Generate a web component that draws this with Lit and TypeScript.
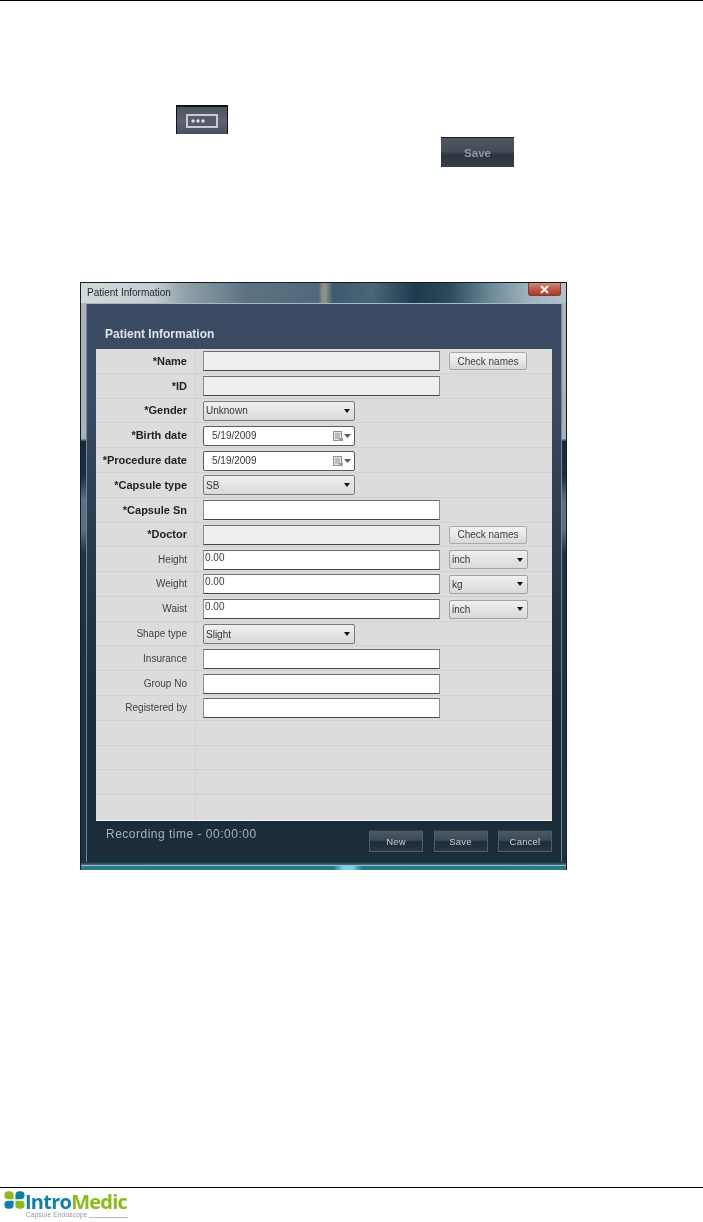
import { LitElement, html, css, svg } from "lit";
import { customElement } from "lit/decorators.js";

type Row = { label: string; strong?: boolean; kind?: string; value?: string; side?: string; sideValue?: string };

const rows: Row[] = [
  { label: "*Name", strong: true, kind: "disabled", side: "button" },
  { label: "*ID", strong: true, kind: "disabled" },
  { label: "*Gender", strong: true, kind: "select", value: "Unknown" },
  { label: "*Birth date", strong: true, kind: "date", value: "5/19/2009" },
  { label: "*Procedure date", strong: true, kind: "date", value: "5/19/2009" },
  { label: "*Capsule type", strong: true, kind: "select", value: "SB" },
  { label: "*Capsule Sn", strong: true, kind: "text" },
  { label: "*Doctor", strong: true, kind: "disabled", side: "button" },
  { label: "Height", kind: "text", value: "0.00", side: "unit", sideValue: "inch" },
  { label: "Weight", kind: "text", value: "0.00", side: "unit", sideValue: "kg" },
  { label: "Waist", kind: "text", value: "0.00", side: "unit", sideValue: "inch" },
  { label: "Shape type", kind: "select", value: "Slight" },
  { label: "Insurance", kind: "text" },
  { label: "Group No", kind: "text" },
  { label: "Registered by", kind: "text" },
  { label: "" },
  { label: "" },
  { label: "" },
  { label: "" },
];

@customElement("app-root")
export class AppRoot extends LitElement {
  static styles = css`
    :host {
      display: flex;
      flex-direction: column;
      width: 703px;
      height: 1222px;
      background: #fff;
      font-family: "Liberation Sans", Arial, sans-serif;
      overflow: hidden;
    }
    .top-rule { height: 1px; background: #000; flex: none; }
    .ellipsis {
      margin: 104px 0 0 176px;
      width: 52px;
      height: 29px;
      box-sizing: border-box;
      border: 1px solid #111318;
      border-top-width: 2px;
      border-bottom: none;
      background: linear-gradient(#4f5464, #5f6474 55%, #4a4f60);
      display: flex;
      align-items: center;
      justify-content: center;
      flex: none;
      filter: blur(0.4px);
    }
    .save-sample {
      margin: 3px 0 0 441px;
      width: 73px;
      height: 30px;
      box-sizing: border-box;
      border-top: 1px solid #1b1f27;
      background: linear-gradient(#4e5560, #464d58 45%, #2c343e 60%, #36414d);
      color: #8d96a3;
      font-size: 11.5px;
      font-weight: bold;
      display: flex;
      align-items: center;
      justify-content: center;
      flex: none;
      filter: blur(0.4px);
    }
    .window {
      margin: 115px 0 0 80px;
      width: 487px;
      height: 588px;
      box-sizing: border-box;
      flex: none;
      display: flex;
      flex-direction: column;
      background: linear-gradient(
        #aab3b7 0,
        #a8b2b6 26.5%,
        #172a3c 27%,
        #1c3044 33%,
        #5b7186 37%,
        #5a7085 42%,
        #1d3346 46%,
        #1c3346 100%
      );
      border: 1px solid #141c22;
      border-bottom: none;
      filter: blur(0.25px);
    }
    .titlebar {
      height: 20px;
      flex: none;
      display: flex;
      justify-content: space-between;
      background: linear-gradient(
        90deg,
        #d3d8da 0,
        #c6cdd1 15%,
        #93a2ac 21%,
        #5d7383 34%,
        #50687a 49%,
        #8b9389 49.8%,
        #8b9389 50.4%,
        #3f5a70 52%,
        #4a6578 60%,
        #1e3a4e 69%,
        #2c4a5c 76%,
        #6f8d9b 85%,
        #9db2bb 92%,
        #b5c3c9 100%
      );
      border-bottom: 1px solid #a4bac4;
    }
    .title {
      font-size: 10px;
      color: #24282c;
      margin: 4px 0 0 6px;
      line-height: 12px;
    }
    .close {
      width: 33px;
      height: 13px;
      margin-right: 5px;
      box-sizing: border-box;
      background: linear-gradient(#d0887a, #c05a48 50%, #a83a2a);
      border: 1px solid #7c3b33;
      border-top: none;
      border-radius: 0 0 3px 3px;
      display: flex;
      align-items: center;
      justify-content: center;
    }
    .client {
      flex: 1;
      margin: 0 4px 0 5px;
      background: linear-gradient(#3c4a63, #3a4a62 18%, #2a3c4e 40%, #1c2e3a 70%, #1b2d39);
      border-left: 1px solid #6f8898;
      border-right: 1px solid #6f8898;
      display: flex;
      flex-direction: column;
      padding: 0 9px;
      min-height: 0;
    }
    .heading {
      font-size: 12px;
      font-weight: bold;
      color: #dfe4ea;
      height: 45px;
      box-sizing: border-box;
      padding: 23px 0 0 9px;
      line-height: 14px;
      flex: none;
    }
    .panel {
      flex: none;
      height: 472px;
      display: grid;
      grid-auto-rows: 1fr;
      background: #dcdcdc;
      border-bottom: 1px solid #f6f6f6;
      box-sizing: border-box;
    }
    .row {
      display: grid;
      grid-template-columns: 99px 7px 1fr;
      border-bottom: 1px solid #d0d2cf;
      min-height: 0;
    }
    .row.last { border-bottom: none; }
    .label {
      font-size: 10px;
      text-align: right;
      color: #3f4245;
      padding-right: 8px;
      display: flex;
      align-items: center;
      justify-content: flex-end;
      white-space: nowrap;
    }
    .label.strong { font-weight: bold; font-size: 11px; color: #1d1f22; }
    .rule { border-left: 1px solid #cfd0cf; }
    .fields {
      display: flex;
      align-items: center;
      padding: 1px 0 0 1px;
      min-width: 0;
    }
    .field {
      box-sizing: border-box;
      width: 237px;
      height: 20px;
      background: #fff;
      border: 1px solid #555a5c;
      border-color: #6a6e70 #8a8e90 #44484a #8a8e90;
      font-size: 10px;
      color: #3a3d40;
      padding: 0 0 3px 1px;
      display: flex;
      align-items: flex-start;
      line-height: 13px;
    }
    .field.disabled { background: #efefef; }
    .select {
      box-sizing: border-box;
      width: 152px;
      height: 20px;
      border: 1px solid #777a7c;
      border-radius: 2px;
      background: linear-gradient(#f0f0f0, #e4e4e4 50%, #dadada);
      font-size: 10px;
      color: #33363a;
      padding: 0 4px 0 2px;
      display: flex;
      align-items: center;
      justify-content: space-between;
    }
    .date {
      background: #fff;
      padding: 0 3px 0 8px;
      border-color: #555a5c;
    }
    .date-icons { display: flex; align-items: center; gap: 1px; }
    .side { margin-left: 9px; }
    .check {
      box-sizing: border-box;
      width: 78px;
      height: 18px;
      border: 1px solid #a9abab;
      border-radius: 2px;
      background: linear-gradient(#f2f2f2, #e9e9e9 50%, #d6d6d6);
      font-size: 10px;
      color: #3a3d40;
      display: flex;
      align-items: center;
      justify-content: center;
    }
    .unit { width: 79px; height: 19px; border-color: #a2a4a4; }
    .footer {
      flex: 1;
      display: flex;
      justify-content: space-between;
      align-items: flex-start;
      min-height: 0;
    }
    .rec {
      color: #a9b2ba;
      font-size: 12px;
      margin: 6px 0 0 10px;
      letter-spacing: 0.5px;
      line-height: 14px;
    }
    .actions { display: flex; gap: 10.5px; margin-top: 9px; }
    .btn {
      box-sizing: border-box;
      width: 54px;
      height: 22px;
      border: 1px solid #4c5f6a;
      border-top-color: #2e3a44;
      background: linear-gradient(#4a5a68, #3d4a56 45%, #1f2c36 55%, #2a3844);
      color: #c9d0d6;
      font-size: 9.5px;
      letter-spacing: 0.2px;
      display: flex;
      align-items: center;
      justify-content: center;
    }
    .bottom-edge {
      height: 8px;
      flex: none;
      box-sizing: border-box;
      background:
        linear-gradient(#1c2e3a, #3a7c80 38%, #a9b4cc 40%, #a9b4cc 52%, transparent 54%),
        linear-gradient(90deg, #2a7a8a, #27788a 52%, #7fd0ee 54%, #7fd0ee 56%, #27788a 58%, #2a7a8a);
    }
    .spacer { flex: 1; }
    .foot-rule { height: 1px; background: #000; flex: none; margin-bottom: 3px; }
    .logo {
      flex: none;
      height: 31px;
      margin-left: 4px;
      display: grid;
      grid-template-columns: 21px auto;
      width: 124px;
      grid-template-rows: 20px 11px;
      filter: blur(0.3px);
    }
    .clover { grid-row: 1; grid-column: 1; }
    .wordmark {
      grid-row: 1;
      grid-column: 2;
      font-size: 20px;
      font-weight: 700;
      line-height: 20px;
      letter-spacing: -0.75px;
      white-space: nowrap;
      font-family: "Open Sans", "Liberation Sans", sans-serif;
      padding-top: 1px;
      height: 19px;
    }
    .intro { color: #137ea5; }
    .medic { color: #8cb91c; }
    .tag {
      grid-row: 2;
      grid-column: 1 / span 2;
      display: flex;
      align-items: flex-start;
      padding-left: 22px;
      font-size: 6.5px;
      letter-spacing: 0.2px;
      color: #8f9598;
      line-height: 8px;
      white-space: nowrap;
    }
    .tag-line { flex: 1; height: 6px; border-bottom: 1px solid #b9bcbe; margin-left: 1px; }
  `;

  private arrow() {
    return html`<svg width="6" height="4" viewBox="0 0 6 4"><path d="M0 0h6L3 4z" fill="#111"/></svg>`;
  }

  private side(r: Row) {
    if (r.side === "button") return html`<div class="check side">Check names</div>`;
    if (r.side === "unit")
      return html`<div class="select unit side"><span>${r.sideValue}</span>${this.arrow()}</div>`;
    return "";
  }

  private control(r: Row) {
    switch (r.kind) {
      case "disabled":
        return html`<div class="field disabled"></div>`;
      case "text":
        return html`<div class="field">${r.value ?? ""}</div>`;
      case "select":
        return html`<div class="select"><span>${r.value}</span>${this.arrow()}</div>`;
      case "date":
        return html`<div class="select date">
          <span>${r.value}</span>
          <span class="date-icons">
            <svg width="10" height="10" viewBox="0 0 10 10">
              <rect x="0.5" y="0.5" width="8" height="9" fill="#e4e6ea" stroke="#8d9198"/>
              <path d="M2 3h5M2 5h5M2 7h5" stroke="#8d9198"/>
              <rect x="6" y="7" width="4" height="3" fill="#9a9ea4"/>
            </svg>
            <svg width="7" height="4" viewBox="0 0 7 4"><path d="M0 0h7L3.5 4z" fill="#55585c"/></svg>
          </span>
        </div>`;
      default:
        return "";
    }
  }

  render() {
    return html`
      <div class="top-rule"></div>
      <div class="ellipsis">
        <svg width="32" height="14" viewBox="0 0 32 14">
          <rect x="1" y="1" width="30" height="12" fill="#565b6b" stroke="#c8cad0" stroke-width="2"/>
          <circle cx="7" cy="7" r="1.7" fill="#dfe1e5"/>
          <circle cx="12" cy="7" r="1.7" fill="#dfe1e5"/>
          <circle cx="17" cy="7" r="1.7" fill="#dfe1e5"/>
        </svg>
      </div>
      <div class="save-sample">Save</div>

      <div class="window">
        <div class="titlebar">
          <div class="title">Patient Information</div>
          <div class="close">
            <svg width="11" height="9" viewBox="0 0 11 9">
              <path d="M2 1l7 7M9 1L2 8" stroke="#f4efe9" stroke-width="2.2"/>
            </svg>
          </div>
        </div>
        <div class="client">
          <div class="heading">Patient Information</div>
          <div class="panel">
            ${rows.map(
              (r, i) => html`<div class="row ${i === rows.length - 1 ? "last" : ""}">
                <div class="label ${r.strong ? "strong" : ""}">${r.label}</div>
                <div class="rule"></div>
                <div class="fields">${this.control(r)}${this.side(r)}</div>
              </div>`
            )}
          </div>
          <div class="footer">
            <div class="rec">Recording time - 00:00:00</div>
            <div class="actions">
              <div class="btn">New</div>
              <div class="btn">Save</div>
              <div class="btn">Cancel</div>
            </div>
          </div>
        </div>
        <div class="bottom-edge"></div>
      </div>

      <div class="spacer"></div>
      <div class="foot-rule"></div>
      <div class="logo">
        <svg class="clover" width="21" height="18" viewBox="0 0 21 18">
          ${svg`
            <path d="M9.600 8.300H4.400A4 4 0 0 1 4.400 .3H5.600A4 4 0 0 1 9.600 4.300Z" fill="#8cb91c"/>
            <path d="M11.400 8.300H16.600A4 4 0 0 0 16.600 .3H15.400A4 4 0 0 0 11.400 4.300Z" fill="#137ea5"/>
            <path d="M9.600 9.700H4.400A4 4 0 0 0 4.400 17.700H5.600A4 4 0 0 0 9.600 13.700Z" fill="#137ea5"/>
            <path d="M11.400 9.700H16.600A4 4 0 0 1 16.600 17.700H15.400A4 4 0 0 1 11.400 13.700Z" fill="#8cb91c"/>
          `}
        </svg>
        <div class="wordmark"><span class="intro">Intro</span><span class="medic">Medic</span></div>
        <div class="tag"><span>Capsule Endoscope</span><span class="tag-line"></span></div>
      </div>
    `;
  }
}
